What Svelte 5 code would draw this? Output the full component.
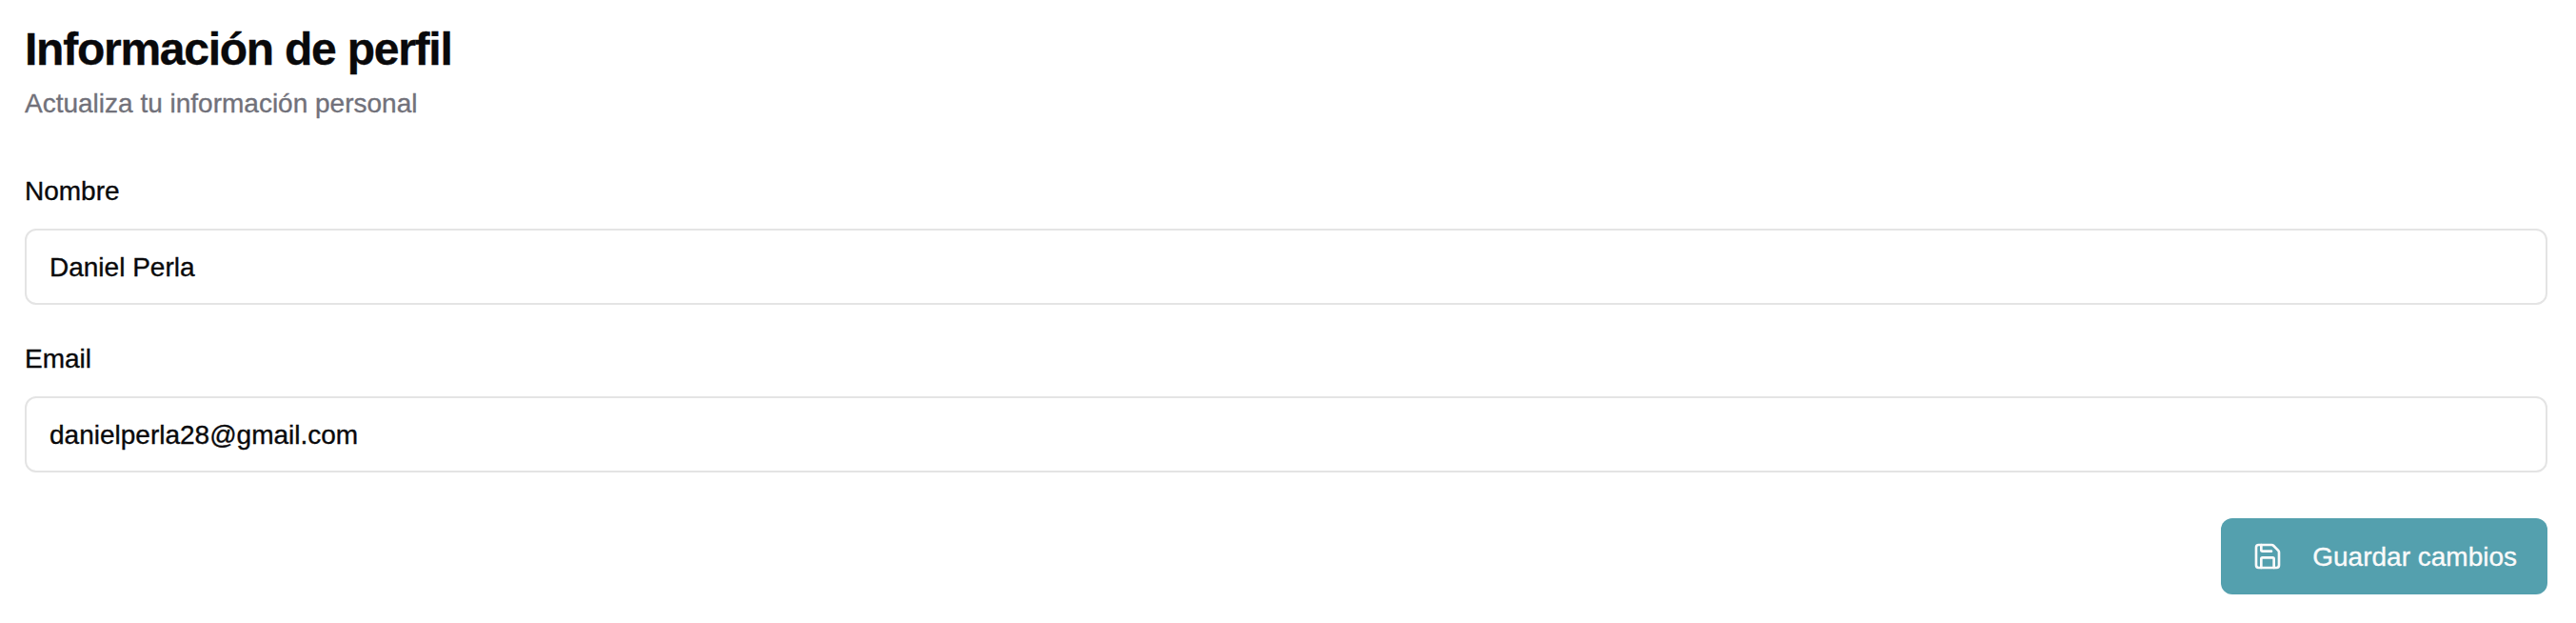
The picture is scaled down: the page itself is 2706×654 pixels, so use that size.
<script>
  let name = $state('Daniel Perla');
  let email = $state('danielperla28@gmail.com');
</script>

<form class="profile" onsubmit={(e) => e.preventDefault()}>
  <header>
    <h1>Información de perfil</h1>
    <p>Actualiza tu información personal</p>
  </header>

  <div class="field">
    <label for="name">Nombre</label>
    <input id="name" type="text" bind:value={name} />
  </div>

  <div class="field">
    <label for="email">Email</label>
    <input id="email" type="email" bind:value={email} />
  </div>

  <footer>
    <button type="submit">
      <svg viewBox="0 0 24 24" width="32" height="32" aria-hidden="true">
        <path d="M15.2 3a2 2 0 0 1 1.4.6l3.8 3.8a2 2 0 0 1 .6 1.4V19a2 2 0 0 1-2 2H5a2 2 0 0 1-2-2V5a2 2 0 0 1 2-2z" />
        <path d="M17 21v-7a1 1 0 0 0-1-1H8a1 1 0 0 0-1 1v7" />
        <path d="M7 3v4a1 1 0 0 0 1 1h7" />
      </svg>
      <span>Guardar cambios</span>
    </button>
  </footer>
</form>

<style>
  :global(body) {
    margin: 0;
    background: #fff;
  }

  .profile {
    box-sizing: border-box;
    min-height: 654px;
    padding: 28px 30px 30px 26px;
    color: #09090b;
    font-family: Helvetica, 'Liberation Sans', Arial, sans-serif;
    font-size: 28px;
    -webkit-text-stroke: 0.35px currentColor;
  }

  header {
    margin-bottom: 58px;
  }

  h1 {
    margin: 0 0 13px;
    font-size: 48px;
    line-height: 48px;
    font-weight: 700;
    letter-spacing: -1.25px;
  }

  p {
    margin: 0;
    line-height: 40px;
    color: #71717a;
  }

  .field {
    display: flex;
    flex-direction: column;
    gap: 25px;
    margin-bottom: 43px;
  }

  label {
    line-height: 28px;
  }

  input {
    box-sizing: border-box;
    width: 100%;
    height: 80px;
    padding: 2px 24px 0;
    border: 2px solid #e4e4e4;
    border-radius: 12px;
    outline: none;
    background: #fff;
    color: inherit;
    font: inherit;
    -webkit-text-stroke: inherit;
  }

  footer {
    display: flex;
    justify-content: flex-end;
    padding-top: 5px;
  }

  button {
    display: flex;
    align-items: center;
    gap: 31px;
    height: 80px;
    padding: 0 32px 0 33px;
    border: 0;
    border-radius: 12px;
    background: #54a0ae;
    color: #fafafa;
    font: inherit;
    -webkit-text-stroke: 0.35px #fafafa;
  }

  span {
    padding-top: 2px;
  }

  svg {
    flex: none;
    fill: none;
    stroke: currentColor;
    stroke-width: 2;
    stroke-linecap: round;
    stroke-linejoin: round;
  }
</style>
